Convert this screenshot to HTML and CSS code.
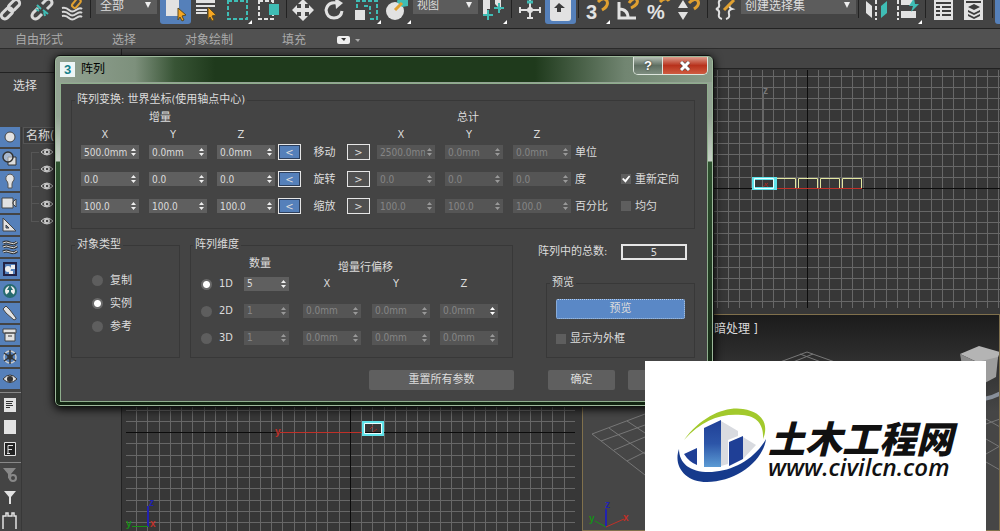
FILE: index.html
```html
<!DOCTYPE html>
<html lang="zh">
<head>
	<meta charset="UTF-8">
	<meta name="viewport" content="width=device-width, initial-scale=1.0">
	<title>阵列</title>
	<link rel="stylesheet" href="styles.css">
</head>
<body>
	<!-- 主工具栏 -->
	<div class="toolbar">
		<button class="tool" aria-label="链接"><svg width="31" height="24" fill="none" stroke="#d8d8d8" stroke-width="3"><rect x="6" y="10" width="13" height="7" rx="3.5" transform="rotate(-45 12 14)"/><rect x="13" y="2" width="13" height="7" rx="3.5" transform="rotate(-45 19 6)"/></svg></button>
		<button class="tool" aria-label="断开链接"><svg width="31" height="24" fill="none" stroke="#d8d8d8" stroke-width="3"><path d="M12 8l-5 5q-2 3 0 5q2 2 5 0l4-4M16 4l4-4q3-2 5 0q2 3 0 5l-4 4"/><path stroke="#3fbdb5" stroke-width="2" d="M11 5l4 4M17 10l5 4M10 9l3 2M18 12l1 4"/></svg></button>
		<button class="tool" aria-label="绑定"><svg width="31" height="24" fill="none" stroke="#d8d8d8" stroke-width="2"><path d="M5 8q4-1 7 2t7 0 6-1M5 12q4-1 7 2t7 0 6-1M5 16q4-1 7 2t7 0 6-1"/><rect x="14" y="1" width="10" height="5" rx="2" stroke="#e0a030" transform="rotate(-50 19 3)"/></svg></button>
		<i class="sep"></i>
		<label class="drop filter"><select aria-label="选择过滤器"><option>全部</option></select></label>
		<button class="tool on" aria-label="选择对象"><svg width="31" height="24"><path fill="#e2e2e2" d="M6 0h13v16H6z"/><path fill="#f5a623" stroke="#5a4a20" d="M18 8l8 7-4 1 2 4-2 1-2-4-2 3z"/></svg></button>
		<button class="tool" aria-label="按名称选择"><svg width="31" height="24"><path fill="#e2e2e2" d="M5 0h19v3H5zM5 5h19v2H5zM5 9h11v2H5zM5 12h11v2H5z"/><path fill="#f5a623" stroke="#5a4a20" d="M17 7l8 8-4 1 2 4-2 1-2-4-2 3z"/></svg></button>
		<button class="tool" aria-label="矩形选择区域"><svg width="31" height="24"><path fill="none" stroke="#3fbdb5" stroke-width="2" stroke-dasharray="4 2" d="M6 0v19h19V0M6 1h19"/><path fill="#fff" d="M30 20v4h-4z"/></svg></button>
		<button class="tool" aria-label="窗口交叉"><svg width="31" height="24"><path fill="none" stroke="#e2e2e2" stroke-width="2" stroke-dasharray="4 2" d="M6 0v19h14v-4M6 1h14v4"/><path fill="#3fbdb5" d="M16 4h10v11H16z"/></svg></button>
		<i class="sep"></i>
		<button class="tool" aria-label="移动"><svg width="31" height="24"><path fill="#e2e2e2" d="M14-1l5 5h-3v4h4V5l5 5-5 5v-3h-4v4h3l-5 5-5-5h3v-4H8v3l-5-5 5-5v3h4V4H9z"/></svg></button>
		<button class="tool" aria-label="旋转"><svg width="31" height="24"><path fill="none" stroke="#e2e2e2" stroke-width="3" d="M17 3q-9-2-11 7q1 8 8 8q7 0 8-7"/><path fill="#e2e2e2" d="M15-2l8 5-7 6z"/></svg></button>
		<button class="tool" aria-label="缩放"><svg width="31" height="24"><path fill="none" stroke="#3fbdb5" stroke-width="2" stroke-dasharray="4 2" d="M6 8V1h20v18h-7M13 6h6v8"/><path fill="#e2e2e2" d="M4 10h10v10H4z"/><path fill="#fff" d="M30 20v4h-4z"/></svg></button>
		<button class="tool" aria-label="放置"><svg width="31" height="24"><circle cx="13" cy="11" r="9" fill="#e2e2e2"/><path fill="#3fbdb5" d="M16-3h10v9l-6 1-5-5z"/><path stroke="#e0a030" stroke-width="3" d="M13 10l7-7"/><path fill="#fff" d="M29 20v4h-4z"/></svg></button>
		<label class="drop coord"><select aria-label="参考坐标系"><option>视图</option></select></label>
		<button class="tool" aria-label="使用轴点中心"><svg width="31" height="24"><path fill="#e2e2e2" d="M5 0h7v9H9v6H5zM17 0h6v10l-6-6z"/><path stroke="#3fbdb5" stroke-width="2" d="M10 10v10M5 15h10M21 3v10M16 8h10"/><path fill="#fff" d="M29 20v4h-4z"/></svg></button>
		<i class="sep"></i>
		<button class="tool" aria-label="操纵"><svg width="31" height="24"><path fill="none" stroke="#e2e2e2" stroke-width="2" d="M16 0v19M6 10h20M13 18h6M6 7v6M26 7v6"/><path stroke="#3fbdb5" stroke-width="3" d="M13 2h6"/><circle cx="16" cy="10" r="3" fill="#e2e2e2"/></svg></button>
		<button class="tool on" aria-label="键盘快捷键"><svg width="31" height="24"><rect x="5" y="-4" width="21" height="25" rx="3" fill="#e2e2e2"/><path fill="#3d3d3d" d="M14 3l6 5h-4v4h-4V8H9z"/></svg></button>
		<i class="sep"></i>
		<button class="tool num" aria-label="捕捉"><svg width="31" height="24"><text x="5" y="19">3</text><path fill="none" stroke="#e0a030" stroke-width="3" d="M17 2q6-6 9-1q2 5-5 9"/><path fill="#fff" d="M29 20v4h-4z"/></svg></button>
		<button class="tool" aria-label="角度捕捉"><svg width="31" height="24" fill="none" stroke-width="3"><path stroke="#e2e2e2" d="M7 2v16h17M7 9q9 0 9 9"/><path stroke="#e0a030" d="M17 3q5-7 8-3q2 4-6 8"/></svg></button>
		<button class="tool num" aria-label="百分比捕捉"><svg width="31" height="24"><text x="4" y="19">%</text><path fill="none" stroke="#e0a030" stroke-width="3" d="M17 2q6-6 9-1"/></svg></button>
		<button class="tool" aria-label="微调器捕捉"><svg width="31" height="24"><path fill="#e2e2e2" d="M9 0l5 8H4zM4 12h10l-5 8z"/><path fill="none" stroke="#e0a030" stroke-width="3" d="M15 3q6-6 9-2q2 4-4 8"/></svg></button>
		<i class="sep"></i>
		<button class="tool" aria-label="编辑命名选择集"><svg width="31" height="24" fill="none" stroke="#e2e2e2" stroke-width="2"><path d="M12-1Q8 0 9 4T6 9q4 1 3 5t3 5M16 19q4-1 3-5t3-5q-3-1-3-5"/><path stroke="#e0a030" stroke-width="3" d="M14 10L24 0"/></svg></button>
		<label class="drop sets"><select aria-label="命名选择集"><option>创建选择集</option></select></label>
		<i class="sep"></i>
		<button class="tool" aria-label="镜像"><svg width="31" height="24"><path fill="#e2e2e2" d="M5 1l6 5v12l-6-5z"/><path fill="#3fbdb5" d="M26 1l-6 5v12l6-5z"/><path stroke="#e2e2e2" stroke-width="2" stroke-dasharray="4 2" d="M15 0v20"/></svg></button>
		<button class="tool" aria-label="对齐"><svg width="31" height="24"><path stroke="#e2e2e2" stroke-width="2" stroke-dasharray="4 2" d="M6 0v20"/><path fill="#e2e2e2" d="M9 0h12v5H9zM9 11h15v7H9z"/><path fill="#3fbdb5" d="M22-2l-5 8h4l-2 6 8-8h-4z"/><path fill="#fff" d="M30 20v4h-4z"/></svg></button>
		<i class="sep"></i>
		<button class="tool" aria-label="层资源管理器"><svg width="31" height="24"><path fill="#e2e2e2" d="M6 0h19v20H6z"/><path stroke="#3d3d3d" stroke-width="2" d="M8 3h15M8 7h4M14 7h9M8 11h4M14 11h9M8 15h4M14 15h9"/></svg></button>
		<button class="tool" aria-label="功能区"><svg width="31" height="24"><path fill="#e2e2e2" d="M5 0h19v20H5z"/><path stroke="#3d3d3d" stroke-width="2" d="M7 2h15"/><path fill="#3d3d3d" d="M15 4l6 3-6 3-6-3zM9 10l6 3 6-3v2l-6 3-6-3zM9 14l6 3 6-3v2l-6 3-6-3z"/></svg></button>
		<i class="sep"></i>
		<button class="tool on" aria-label="曲线编辑器"></button>
	</div>

	<!-- 功能区标签 -->
	<div class="ribbon">
		<a href="#">自由形式</a>
		<a href="#">选择</a>
		<a href="#">对象绘制</a>
		<a href="#">填充</a>
		<button class="ribbon-more" aria-label="最小化"><svg width="24" height="10"><rect y="1" width="13" height="8" rx="2" fill="#eee"/><path fill="#333" d="M4 3h5l-2 3z"/><path fill="#aaa" d="M18 4h5l-2 3z"/></svg></button>
	</div>

	<div class="main">
		<!-- 场景资源管理器 -->
		<div class="explorer">
			<div class="strip"></div>
			<div class="caption">选择</div>
			<div class="explorer-body">
				<div class="side">
					<button class="on" aria-label="几何体"><svg width="20" height="20"><circle cx="10" cy="10" r="5" fill="#e2e2e2" stroke="#444"/></svg></button>
					<button class="on" aria-label="图形"><svg width="20" height="20"><path fill="#ddd" stroke="#333" d="M8 8h8v8H8z"/><circle cx="8" cy="8" r="5" fill="#ddd" fill-opacity=".6" stroke="#333" stroke-width="1.5"/></svg></button>
					<button class="on" aria-label="灯光"><svg width="20" height="20"><path fill="#e2e2e2" stroke="#555" d="M8 13q0-2-2-4q-1-5 4-6q5 1 4 6q-2 2-2 4v4H8z"/></svg></button>
					<button class="on" aria-label="摄影机"><svg width="20" height="20"><path fill="#e2e2e2" stroke="#444" d="M2 5h11v10H2zM13 9l3-3v8l-3-3z"/></svg></button>
					<button class="on" aria-label="辅助对象"><svg width="20" height="20"><path fill="#e2e2e2" stroke="#444" fill-rule="evenodd" d="M3 3l13 13H3zM6 10v3h3z"/></svg></button>
					<button class="on" aria-label="空间扭曲"><svg width="20" height="20" fill="none" stroke="#333" stroke-width="3"><path d="M3 6q3-2 7 0t7-1M3 10q3-2 7 0t7-1M3 15q3-2 7 0t7-1"/><path stroke="#ddd" stroke-width="1" d="M3 6q3-2 7 0t7-1M3 10q3-2 7 0t7-1M3 15q3-2 7 0t7-1"/></svg></button>
					<button class="on" aria-label="组"><svg width="20" height="20"><path fill="none" stroke="#224" stroke-width="2" d="M4 4h12v12H4z"/><circle cx="8" cy="10" r="3" fill="#eee"/><path fill="#eee" d="M11 6h4v4h-4zM9 12h4v3H9z"/></svg></button>
					<button class="on" aria-label="外部参照"><svg width="20" height="20"><circle cx="10" cy="10" r="6" fill="#eee" stroke="#276b70" stroke-width="2"/><path fill="#276b70" d="M10 4l3 5h-2v2l4 4H5l4-4V9H7z"/></svg></button>
					<button class="on" aria-label="骨骼"><svg width="20" height="20"><path fill="#e2e2e2" stroke="#444" d="M3 6l3-3 4 4 6 8v1l-2 1-8-7z"/></svg></button>
					<button class="on" aria-label="容器"><svg width="20" height="20"><path fill="#e2e2e2" stroke="#444" d="M3 4h13v4H3zM5 8h10v8H5z"/><path stroke="#333" d="M8 11h4"/></svg></button>
					<button class="on" aria-label="冻结"><svg width="20" height="20" fill="none" stroke="#333" stroke-width="1.5"><circle cx="10" cy="10" r="6" stroke="#ccc"/><path d="M10 3v14M4 6l12 8M16 6L4 14"/><circle cx="10" cy="10" r="2"/></svg></button>
					<button class="on" aria-label="隐藏"><svg width="20" height="20"><path fill="#ddd" stroke="#333" d="M3 10q7-8 14 0q-7 7-14 0z"/><circle cx="10" cy="10" r="3" fill="#333"/></svg></button>
					<hr>
					<button aria-label="全部显示"><svg width="20" height="20"><path fill="#e2e2e2" d="M4 3h12v14H4z"/><path stroke="#333" d="M6 6.500h7M6 8.500h6M6 10.500h7M6 12.500h4"/></svg></button>
					<button aria-label="全部不显示"><svg width="20" height="20"><path fill="#e2e2e2" d="M4 3h12v14H4z"/></svg></button>
					<button aria-label="反转显示"><svg width="20" height="20"><path fill="#222" stroke="#e2e2e2" d="M4.500 3.500h11v13h-11z"/><path fill="none" stroke="#e2e2e2" d="M8 14V6.500h5M8 10.500h4M7 14.500h3"/></svg></button>
					<hr>
					<button aria-label="高级过滤"><svg width="20" height="20"><path fill="#888" d="M3 3h13l-5 6v7l-3-3V9z"/><circle cx="13" cy="13" r="3" fill="none" stroke="#888" stroke-width="2"/></svg></button>
					<button aria-label="过滤"><svg width="20" height="20"><path fill="#e2e2e2" d="M4 4h12l-5 6v7H9v-7z"/></svg></button>
					<button aria-label="包含"><svg width="20" height="20"><path fill="none" stroke="#e2e2e2" stroke-width="1.5" d="M3 20V7h3V4h2v3h4V4h2v3h2v13"/></svg></button>
				</div>
				<div class="tree">
					<div class="tree-head">名称(</div>
					<svg width="32" height="94"><path stroke="#565656" fill="none" d="M8.500 8v70M8 8.500h8M8 25.500h8M8 42.500h8M8 59.500h8M8 77.500h8"/><g id="eye"><path fill="none" stroke="#d0d0d0" d="M18 8q6-6 12 0q-6 6-12 0z"/><circle cx="24" cy="8" r="3" fill="#d0d0d0"/><circle cx="24" cy="8" r="1" fill="#222"/></g><use href="#eye" y="17"/><use href="#eye" y="34"/><use href="#eye" y="52"/><use href="#eye" y="69"/></svg>
				</div>
			</div>
		</div>

		<!-- 四个视口，坐标沿用整个窗口的坐标 -->
		<div class="viewports">
			<div class="view"></div>
			<div class="view">
				<svg class="scene">
					<defs>
						<pattern id="grid1" patternUnits="userSpaceOnUse" x="807" y="188" width="45" height="45"><path fill="none" stroke="#676767" d="M.500 0v45M11.500 0v45M22.500 0v45M34.500 0v45M0 .500h45M0 11.500h45M0 23.500h45M0 34.500h45"/></pattern>
					</defs>
					<g transform="translate(-582 -69)">
						<path fill="url(#grid1)" d="M590 70h410v238H590z"/>
						<path stroke="#0c0c0c" d="M807.500 70v238M590 188.500h410"/>
						<path stroke="#666" d="M763.500 94v84"/>
						<text class="axis" x="763" y="94" fill="#777">z</text>
						<path fill="none" stroke="#e3e7a0" d="M776 178.500h19.500v10M798.500 188v-9.500h19v10M820.500 188v-9.500h19v10M842.500 188v-9.500h19v10"/>
						<path stroke="#c03028" d="M764 188.500h98"/>
						<path fill="none" stroke="#5fe3ea" stroke-width="3" d="M753.500 178.500h22v10h-22z"/>
						<path fill="none" stroke="#e8ffff" d="M754.500 178.500h19v10h-19z"/>
						<path stroke="#a02c24" d="M763 187l5-4M765 183l3 4"/>
					</g>
				</svg>
			</div>
			<div class="view">
				<svg class="scene">
					<defs>
						<pattern id="grid2" patternUnits="userSpaceOnUse" x="350" y="433" width="45" height="45"><path fill="none" stroke="#676767" d="M.500 0v45M11.500 0v45M22.500 0v45M34.500 0v45M0 .500h45M0 11.500h45M0 23.500h45M0 34.500h45"/></pattern>
					</defs>
					<g transform="translate(-122 -315)">
						<path fill="url(#grid2)" d="M126 320h449v230H126z"/>
						<path stroke="#0c0c0c" d="M350.500 320v230M126 433.500h449"/>
						<path stroke="#c03028" d="M280 433.500h82"/>
						<text class="axis" x="275" y="436" fill="#c03028">y</text>
						<path fill="none" stroke="#5fe3ea" stroke-width="3" d="M363.500 423.500h19v12h-19z"/>
						<path fill="none" stroke="#e8ffff" d="M364.500 424.500h17v10h-17z"/>
						<path stroke="#a02c24" d="M370 430l3-3M373 433l4-3"/>
						<path stroke="#2222b0" stroke-width="2" d="M148 507v21"/>
						<path stroke="#169016" d="M132 527.500h16"/>
						<text class="axis" x="149" y="507" fill="#2222b0">z</text>
						<text class="axis" x="126" y="528" fill="#169016">y</text>
						<text class="axis" x="150" y="528" fill="#c03028">x</text>
					</g>
				</svg>
			</div>
			<div class="view persp">
				<span class="view-label">暗处理 ]</span>
				<svg class="scene">
					<g transform="translate(-583 -316)" fill="none" stroke="#777">
						<path d="M592 435l53-20M592 435l53 41M601 442l44-16M614 451l31-13M627 462l18-9M609 429l36 26M627 422l18 12"/>
						<path d="M780 363l27-10 28 10M793 363l20-8M821 363l-21-8"/>
						<path d="M986 425l14-5M986 440l14 8M986 455l14-8M986 463l14 8M986 420l14 8"/>
						<path stroke="#888f9a" stroke-width="4" d="M984 400q11-2 20-8"/>
						<path fill="#b4b4b4" stroke="none" d="M960 355l19-8 21 6-3 8-20 2z"/>
						<path fill="#8c8c8c" stroke="none" d="M960 355l17 8 2 22-15-8z"/>
						<path fill="#9d9d9d" stroke="none" d="M977 363l21-5-2 20-17 9z"/>
						<path stroke="#2222b0" stroke-width="2" d="M606 510v18"/>
						<path stroke="#169016" d="M606 528l-11-6"/>
						<path stroke="#c03028" d="M606 528l18-8"/>
						<g stroke="none">
							<text class="axis" x="605" y="509" fill="#2222b0">z</text>
							<text class="axis" x="589" y="523" fill="#169016">y</text>
							<text class="axis" x="623" y="522" fill="#c03028">x</text>
						</g>
					</g>
				</svg>
			</div>
		</div>
	</div>

	<!-- 阵列对话框，浮在视口上面 -->
	<form class="dialog">
		<div class="title">
			<span class="logo3">3</span>
			<span>阵列</span>
			<div class="caption-buttons">
				<button type="button" class="help" aria-label="帮助">?</button>
				<button type="button" class="close" aria-label="关闭"><svg width="12" height="10"><path stroke="#444" stroke-width="4" d="M2 1l8 8M10 1L2 9"/><path stroke="#fff" stroke-width="3" d="M2 1l8 8M10 1L2 9"/></svg></button>
			</div>
		</div>
		<div class="client">
			<fieldset class="transform">
				<legend>阵列变换: 世界坐标(使用轴点中心)</legend>
				<div class="cols">
					<span class="inc">增量</span>
					<span class="total">总计</span>
				</div>
				<div class="cols">
					<span class="xyz">X</span><span class="xyz">Y</span><span class="xyz">Z</span>
					<i></i><i></i><i></i>
					<span class="xyz">X</span><span class="xyz">Y</span><span class="xyz">Z</span>
				</div>
				<div class="cols rows">
					<span class="spin"><input type="text" value="500.0mm" aria-label="增量移动 X"></span>
					<span class="spin"><input type="text" value="0.0mm" aria-label="增量移动 Y"></span>
					<span class="spin"><input type="text" value="0.0mm" aria-label="增量移动 Z"></span>
					<button type="button" class="arrow on" aria-label="移动增量">&lt;</button>
					<span class="op">移动</span>
					<button type="button" class="arrow" aria-label="移动总计">&gt;</button>
					<span class="spin off"><input type="text" value="2500.0mm" aria-label="总计移动 X" disabled></span>
					<span class="spin off"><input type="text" value="0.0mm" aria-label="总计移动 Y" disabled></span>
					<span class="spin off"><input type="text" value="0.0mm" aria-label="总计移动 Z" disabled></span>
					<span>单位</span>
					<i></i>

					<span class="spin"><input type="text" value="0.0" aria-label="增量旋转 X"></span>
					<span class="spin"><input type="text" value="0.0" aria-label="增量旋转 Y"></span>
					<span class="spin"><input type="text" value="0.0" aria-label="增量旋转 Z"></span>
					<button type="button" class="arrow on" aria-label="旋转增量">&lt;</button>
					<span class="op">旋转</span>
					<button type="button" class="arrow" aria-label="旋转总计">&gt;</button>
					<span class="spin off"><input type="text" value="0.0" aria-label="总计旋转 X" disabled></span>
					<span class="spin off"><input type="text" value="0.0" aria-label="总计旋转 Y" disabled></span>
					<span class="spin off"><input type="text" value="0.0" aria-label="总计旋转 Z" disabled></span>
					<span>度</span>
					<label class="check"><input type="checkbox" checked>重新定向</label>

					<span class="spin"><input type="text" value="100.0" aria-label="增量缩放 X"></span>
					<span class="spin"><input type="text" value="100.0" aria-label="增量缩放 Y"></span>
					<span class="spin"><input type="text" value="100.0" aria-label="增量缩放 Z"></span>
					<button type="button" class="arrow on" aria-label="缩放增量">&lt;</button>
					<span class="op">缩放</span>
					<button type="button" class="arrow" aria-label="缩放总计">&gt;</button>
					<span class="spin off"><input type="text" value="100.0" aria-label="总计缩放 X" disabled></span>
					<span class="spin off"><input type="text" value="100.0" aria-label="总计缩放 Y" disabled></span>
					<span class="spin off"><input type="text" value="100.0" aria-label="总计缩放 Z" disabled></span>
					<span>百分比</span>
					<label class="check"><input type="checkbox">均匀</label>
				</div>
			</fieldset>

			<div class="lower">
				<fieldset class="type">
					<legend>对象类型</legend>
					<label><input type="radio" name="type">复制</label>
					<label><input type="radio" name="type" checked>实例</label>
					<label><input type="radio" name="type">参考</label>
				</fieldset>

				<fieldset class="dims">
					<legend>阵列维度</legend>
					<div class="dim-cols dim-head">
						<i></i>
						<span class="count">数量</span>
						<span class="offset">增量行偏移</span>
					</div>
					<div class="dim-cols rows">
						<label><input type="radio" name="dim" checked>1D</label>
						<span class="spin short"><input type="text" value="5" aria-label="1D 数量"></span>
						<span class="xyz">X</span><span class="xyz">Y</span><span class="xyz">Z</span>

						<label><input type="radio" name="dim">2D</label>
						<span class="spin short off"><input type="text" value="1" aria-label="2D 数量" disabled></span>
						<span class="spin off"><input type="text" value="0.0mm" aria-label="2D X" disabled></span>
						<span class="spin off"><input type="text" value="0.0mm" aria-label="2D Y" disabled></span>
						<span class="spin off lit"><input type="text" value="0.0mm" aria-label="2D Z" disabled></span>

						<label><input type="radio" name="dim">3D</label>
						<span class="spin short off"><input type="text" value="1" aria-label="3D 数量" disabled></span>
						<span class="spin off"><input type="text" value="0.0mm" aria-label="3D X" disabled></span>
						<span class="spin off"><input type="text" value="0.0mm" aria-label="3D Y" disabled></span>
						<span class="spin off"><input type="text" value="0.0mm" aria-label="3D Z" disabled></span>
					</div>
				</fieldset>

				<div class="right">
					<div class="sum">
						<label for="sum">阵列中的总数:</label>
						<output id="sum">5</output>
					</div>
					<fieldset class="preview">
						<legend>预览</legend>
						<button type="button" class="btn on">预览</button>
						<label class="check"><input type="checkbox">显示为外框</label>
					</fieldset>
				</div>
			</div>

			<div class="buttons">
				<button type="button" class="btn reset">重置所有参数</button>
				<button type="button" class="btn">确定</button>
				<button type="button" class="btn">取消</button>
			</div>
		</div>
	</form>

	<!-- 右下角水印 -->
	<div class="brand">
		<svg width="92" height="76" viewBox="0 0 92 76">
			<defs>
				<linearGradient id="tower" x2="0" y2="1"><stop offset="0" stop-color="#1f3f96"/><stop offset="0.500" stop-color="#2c55a8"/><stop offset="1" stop-color="#5c9bd4"/></linearGradient>
			</defs>
			<path fill="#d9dbe0" d="M45 13l17 10v5l-10 4v24l-7 2zM67 29l13 8-13 14z"/>
			<path fill="url(#tower)" d="M28 20l17-8v47H28z"/>
			<path fill="#1f3f96" d="M53 34l14-6v23l-14 7zM8 46l13-6v17q-8-3-13-11z"/>
			<path fill="#a2c92c" d="M8 32C25 8 50-2 67 1c20 3 26 16 20 30C88 18 82 8 66 7 45 5 26 12 8 32z"/>
			<path fill="#163a8c" d="M3 41C-3 58 9 74 31 74c28 0 56-20 59-43C79 51 57 63 36 64 15 65 3 56 3 41z"/>
		</svg>
		<div class="brand-text">
			<strong>土木工程网</strong>
			<span>www.civilcn.com</span>
		</div>
	</div>
</body>
</html>
```
FILE: styles.css
```css
*{
	box-sizing: border-box;
}
body{
	margin: 0;
	height: 100vh;
	display: flex;
	flex-direction: column;
	overflow: hidden;
	position: relative;
	background: #444;
	color: #dcdcdc;
	font: 12px/14px "DejaVu Sans Condensed", "Noto Sans CJK SC", sans-serif;
}
button, input, select{
	font: inherit;
	color: inherit;
	margin: 0;
	padding: 0;
	border: 0;
	background: none;
}
svg{
	display: block;
}
a{
	color: inherit;
	text-decoration: none;
}

/* 主工具栏 */
.toolbar{
	display: flex;
	height: 28px;
	flex: none;
	margin-left: -5px;
	overflow: hidden;
	background: #444;
}
.tool{
	width: 31px;
	height: 24px;
	flex: none;
}
.tool.on{
	background: #5580ba;
	border-radius: 0 0 3px 3px;
}
.num text{
	font: bold 20px "Liberation Sans", sans-serif;
	fill: #e2e2e2;
}
.sep{
	width: 1px;
	height: 18px;
	margin: 0 2px;
	flex: none;
	background: #222;
}
.drop{
	height: 14px;
	flex: none;
	position: relative;
	background: #5c5c5c;
}
.drop select{
	display: block;
	width: 100%;
	height: 12px;
	padding-left: 4px;
	appearance: none;
	line-height: 12px;
}
.drop::after{
	content: "";
	position: absolute;
	right: 6px;
	top: 2px;
	width: 6px;
	height: 6px;
	background: #eee;
	clip-path: polygon(0 0, 100% 0, 50% 100%);
}
.filter{
	width: 61px;
	margin: 0 3px;
}
.coord{
	width: 65px;
	font-size: 11px;
}
.sets{
	width: 115px;
}

/* 功能区 */
.ribbon{
	display: flex;
	align-items: center;
	gap: 49px;
	height: 21px;
	flex: none;
	padding: 2px 0 0 15px;
	border-top: 1px solid #222;
	border-bottom: 1px solid #2c2c2c;
	background: #515151;
	color: #aaa;
}
.ribbon-more{
	margin-left: -18px;
}

.main{
	flex: 1;
	min-height: 0;
	display: flex;
}

/* 场景资源管理器 */
.explorer{
	width: 122px;
	flex: none;
	border-right: 1px solid #222;
}
.strip{
	height: 24px;
	border-bottom: 1px solid #222;
}
.caption{
	height: 54px;
	padding: 6px 13px;
}
.explorer-body{
	display: flex;
}
.side{
	width: 22px;
	border-right: 1px solid #383838;
}
.side button{
	display: block;
	width: 20px;
	height: 20px;
	margin-bottom: 2px;
}
.side .on{
	background: #5580ba;
}
.side hr{
	height: 1px;
	margin: 3px 0 2px;
	border: 0;
	background: #888;
}
.tree{
	flex: 1;
	padding-left: 1px;
}
.tree-head{
	height: 17px;
	padding: 1px 2px;
	border: 1px solid #555;
	background: #3c3c3c;
}

/* 视口 */
.viewports{
	flex: 1;
	display: grid;
	grid-template-columns: 460fr 418fr;
	grid-template-rows: 246fr 217fr;
	margin-top: 19px;
	border-top: 1px solid #222;
}
.view{
	overflow: hidden;
	background: #373737;
}
.scene{
	width: 100%;
	height: 100%;
}
.persp{
	position: relative;
	border: 1px solid #80704c;
	background: linear-gradient(#1b1b1b, #464646 45%);
}
.view-label{
	position: absolute;
	left: 131px;
	top: 7px;
}
.axis{
	font: bold 10px "Liberation Sans", sans-serif;
}

/* 对话框 */
.dialog{
	position: absolute;
	left: 54px;
	top: 55px;
	width: 660px;
	padding: 1px 5px 4px;
	border: 1px solid #111;
	border-radius: 6px;
	background:
		linear-gradient(90deg, #93a393 0, #7d907c 80px, #385435 120px, #1f3a1c 160px, #1f3a1c 480px, #718571 570px, #8a9d89) 0 0 / 100% 26px no-repeat,
		linear-gradient(#93a393 60px, #c5d0c5 105px, #2f5230 106px, #122412);
	box-shadow: inset 0 0 0 1px #9db89b, 0 2px 10px #000;
	font-size: 11px;
}
.title{
	display: flex;
	gap: 6px;
	height: 26px;
	padding-top: 5px;
	color: #000;
	font-size: 12px;
}
.logo3{
	width: 15px;
	height: 15px;
	background: #eef6f6;
	color: #16808a;
	font: bold 13px/15px "Liberation Sans", sans-serif;
	text-align: center;
}
.caption-buttons{
	display: flex;
	height: 18px;
	margin: -5px 0 0 auto;
	border: 1px solid #dde5dd;
	border-top: 0;
	border-radius: 0 0 5px 5px;
	overflow: hidden;
}
.help{
	width: 28px;
	background: linear-gradient(#b5c0b5, #5f6f62 50%, #7e8e80);
	color: #fff;
	font: bold 13px/14px "Liberation Sans", sans-serif;
	text-shadow: 0 0 2px #222;
}
.close{
	display: flex;
	align-items: center;
	justify-content: center;
	width: 45px;
	border-left: 1px solid #dde5dd;
	background: linear-gradient(#dd9c8c, #b8321c 50%, #cf5c40);
}
.client{
	padding: 9px 12px 11px 10px;
	border: 1px solid #8fae8d;
	background: #444;
}
fieldset{
	min-width: 0;
	margin: 0;
	padding: 0 9px;
	border: 1px solid #383838;
}
legend{
	height: 14px;
	margin-left: -6px;
	padding: 0 2px;
}
.transform{
	height: 136px;
}
.cols{
	display: grid;
	grid-template-columns: 68px 68px 61px 24px 45px 30px 68px 68px 62px 46px 1fr;
	align-items: center;
	line-height: 17px;
}
.transform legend + .cols{
	margin-top: 2px;
}
.inc{
	grid-column: 2;
}
.total{
	grid-column: 8;
	padding-left: 12px;
}
.xyz{
	width: 48px;
	text-align: center;
}
.rows{
	grid-auto-rows: 18px;
	row-gap: 9px;
}
.spin{
	display: flex;
	align-items: center;
	gap: 2px;
	width: 58px;
	height: 14px;
	padding: 0 3px;
	background: #5f5f5f;
	font-size: 10px;
}
.spin input{
	flex: 1;
	min-width: 0;
	height: 14px;
}
.spin::after{
	content: "";
	width: 5px;
	height: 8px;
	background: #eee;
	clip-path: polygon(50% 0, 100% 38%, 0 38%, 0 62%, 100% 62%, 50% 100%, 0 62%, 0 38%);
}
.short{
	width: 45px;
}
.off{
	background: #555;
	color: #858585;
}
.off::after{
	background: #999;
}
.lit::after{
	background: #fff;
}
.arrow{
	width: 23px;
	height: 16px;
	border: 1px solid #e6e6e6;
	background: #505050;
	line-height: 13px;
}
.arrow.on{
	background: #5580ba;
	box-shadow: inset 0 0 0 1px #2d3f5c;
}
.op{
	text-align: center;
}

/* 单选和复选 */
input[type="radio"], input[type="checkbox"]{
	appearance: none;
	flex: none;
	width: 11px;
	height: 11px;
	background: #5e5e5e;
}
input[type="radio"]{
	border-radius: 50%;
}
input[type="radio"]:checked{
	background: radial-gradient(#fff 3px, #6a6a6a 4px);
}
input[type="checkbox"]{
	width: 10px;
	height: 10px;
}
input[type="checkbox"]:checked::before{
	content: "";
	display: block;
	height: 100%;
	background: #fff;
	clip-path: polygon(10% 50%, 25% 40%, 42% 58%, 80% 15%, 92% 25%, 45% 88%);
}
fieldset label{
	display: flex;
	align-items: center;
}
.check{
	gap: 4px;
}

.lower{
	display: flex;
	height: 120px;
	margin-top: 9px;
}
.type{
	width: 109px;
	margin-right: 10px;
	padding-left: 20px;
}
.type label{
	gap: 7px;
	height: 23px;
}
.type legend{
	margin: 0 0 17px -17px;
}
.dims{
	width: 323px;
	padding: 0 10px;
}
.dims legend{
	margin-left: -8px;
}
.dim-cols{
	display: grid;
	grid-template-columns: 43px 59px 69px 68px 1fr;
	align-items: center;
}
.dim-head{
	height: 18px;
	margin-top: 5px;
}
.count{
	align-self: start;
	padding-left: 5px;
}
.offset{
	grid-column: 3 / 5;
	align-self: end;
	padding-left: 35px;
}
.dims label{
	gap: 7px;
}
.right{
	flex: 1;
	padding-left: 25px;
	display: flex;
	flex-direction: column;
}
.sum{
	display: flex;
	align-items: center;
	justify-content: space-between;
	height: 28px;
	margin-bottom: 10px;
	padding-right: 8px;
}
.sum output{
	width: 66px;
	height: 16px;
	border: 2px solid #e6e6e6;
	line-height: 13px;
	text-align: center;
}
.preview{
	flex: 1;
	margin-left: 8px;
}
.preview .btn{
	width: 100%;
	margin: 9px 0 13px;
}
.btn{
	width: 67px;
	height: 20px;
	border-radius: 2px;
	background: #5f5f5f;
}
.btn.on{
	border: 1px dotted #b5cdea;
	background: #5a88c6;
}
.buttons{
	display: flex;
	justify-content: flex-end;
	gap: 13px;
	margin-top: 12px;
}
.buttons .reset{
	width: 145px;
	margin-right: 21px;
}

/* 水印 */
.brand{
	position: absolute;
	right: 14px;
	bottom: 0;
	display: flex;
	align-items: flex-start;
	width: 341px;
	height: 170px;
	padding: 47px 0 0 31px;
	background: #fff;
	color: #111;
}
.brand-text{
	display: flex;
	flex-direction: column;
	padding-top: 11px;
	white-space: nowrap;
}
.brand strong{
	font: italic 900 37px/36px "Noto Sans CJK SC", sans-serif;
}
.brand span{
	font: italic 600 24px/24px "Open Sans", sans-serif;
}
```
